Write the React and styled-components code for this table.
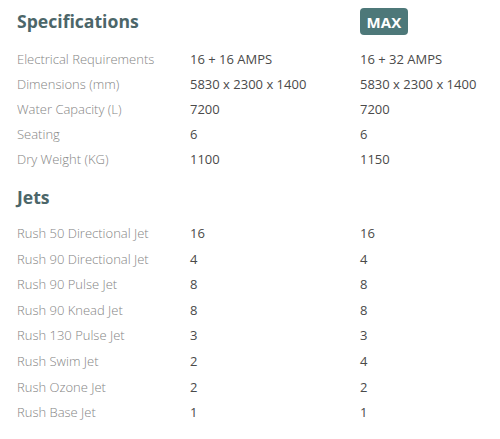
import React from "react";
import styled, { createGlobalStyle } from "styled-components";

const Global = createGlobalStyle`
  html, body { margin: 0; padding: 0; background: #fff; }
  body { font-family: "Open Sans", sans-serif; }
`;

const Page = styled.div`
  width: 500px;
  height: 439px;
  padding: 8px 0 0 17px;
  box-sizing: border-box;
  overflow: hidden;
`;

const Grid = styled.div`
  display: grid;
  grid-template-columns: 173px 170px 1fr;
`;

const HeadRow = styled.div`
  display: contents;
`;

const Heading = styled.h2`
  margin: 0;
  font-family: "Open Sans", sans-serif;
  font-weight: 700;
  font-size: 17.6px;
  color: #4c6669;
  line-height: 27px;
  height: ${(p) => p.$h}px;
  padding-top: ${(p) => p.$pt || 0}px;
  box-sizing: content-box;
  grid-column: ${(p) => (p.$full ? "1 / -1" : "auto")};
`;

const BadgeCell = styled.div`
  grid-column: 3;
  height: ${(p) => p.$h}px;
`;

const Badge = styled.span`
  display: inline-flex;
  align-items: center;
  justify-content: center;
  width: 48px;
  height: 27px;
  border-radius: 4px;
  background: #4d7879;
  color: #fff;
  font-weight: 700;
  font-size: 15px;
  letter-spacing: 0.2px;
`;

const Label = styled.div`
  grid-column: 1;
  font-size: 13px;
  font-weight: 300;
  color: #858585;
  line-height: ${(p) => p.$lh}px;
  white-space: nowrap;
`;

const Value = styled.div`
  font-size: 13px;
  font-weight: 400;
  color: #4a4a4a;
  line-height: ${(p) => p.$lh}px;
  white-space: nowrap;
`;

const specs = [
  ["Electrical Requirements", "16 + 16 AMPS", "16 + 32 AMPS"],
  ["Dimensions (mm)", "5830 x 2300 x 1400", "5830 x 2300 x 1400"],
  ["Water Capacity (L)", "7200", "7200"],
  ["Seating", "6", "6"],
  ["Dry Weight (KG)", "1100", "1150"],
];

const jets = [
  ["Rush 50 Directional Jet", "16", "16"],
  ["Rush 90 Directional Jet", "4", "4"],
  ["Rush 90 Pulse Jet", "8", "8"],
  ["Rush 90 Knead Jet", "8", "8"],
  ["Rush 130 Pulse Jet", "3", "3"],
  ["Rush Swim Jet", "2", "4"],
  ["Rush Ozone Jet", "2", "2"],
  ["Rush Base Jet", "1", "1"],
];

const Rows = ({ data, lh }) =>
  data.map(([l, a, b]) => (
    <React.Fragment key={l}>
      <Label $lh={lh}>{l}</Label>
      <Value $lh={lh}>{a}</Value>
      <Value $lh={lh}>{b}</Value>
    </React.Fragment>
  ));

export default function App() {
  return (
    <>
      <Global />
      <Page>
        <Grid>
          <HeadRow>
            <Heading $h={39}>Specifications</Heading>
            <div />
            <BadgeCell $h={39}>
              <Badge>MAX</Badge>
            </BadgeCell>
          </HeadRow>
          <Rows data={specs} lh={25} />
          <Heading $full $h={37} $pt={12}>
            Jets
          </Heading>
          <Rows data={jets} lh={25.6} />
        </Grid>
      </Page>
    </>
  );
}
